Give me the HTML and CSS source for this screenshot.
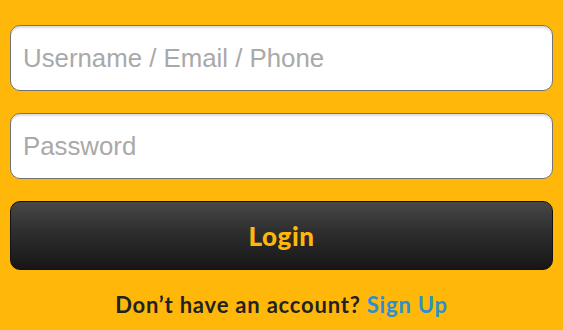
FILE: index.html
```html
<!DOCTYPE html>
<html>
<head>
<meta charset="utf-8">
<link rel="stylesheet" href="styles.css">
</head>
<body>
<form class="login">
  <input class="field" type="text" placeholder="Username / Email / Phone">
  <input class="field" type="password" placeholder="Password">
  <button class="btn" type="button">Login</button>
  <p class="signup">Don’t have an account? <a href="#">Sign Up</a></p>
</form>
</body>
</html>
```
FILE: styles.css
```css
html, body {
  margin: 0;
  padding: 0;
  background: #ffb80a;
}
.login {
  display: flex;
  flex-direction: column;
  padding: 25px 10px 0 10px;
  gap: 22px;
}
.field {
  box-sizing: border-box;
  height: 66px;
  width: 100%;
  margin: 0;
  border: 1.5px solid #737373;
  border-radius: 10px;
  background: #fff;
  box-shadow: inset 0 3px 2px -1px #dcdcdc;
  padding: 0 12px;
  font-family: "Liberation Sans", Arial, sans-serif;
  font-size: 25.8px;
  color: #333;
  outline: none;
}
.field::placeholder {
  color: #a9a9a9;
}
.btn {
  box-sizing: border-box;
  height: 69px;
  width: 100%;
  margin: 0;
  border: 1.5px solid #111;
  border-radius: 10px;
  background: linear-gradient(#474747, #2e2e2e 45%, #161616);
  color: #ffb80a;
  font-family: Lato, "Noto Sans", sans-serif;
  font-weight: 900;
  font-size: 26px;
  letter-spacing: 0.6px;
  cursor: pointer;
}
.signup {
  margin: -1px 0 0 0;
  text-align: center;
  font-family: Lato, "Noto Sans", sans-serif;
  font-weight: 700;
  font-size: 22px;
  letter-spacing: 0.8px;
  color: #222;
}
.signup a {
  color: #2b8fd3;
  text-decoration: none;
}
```
